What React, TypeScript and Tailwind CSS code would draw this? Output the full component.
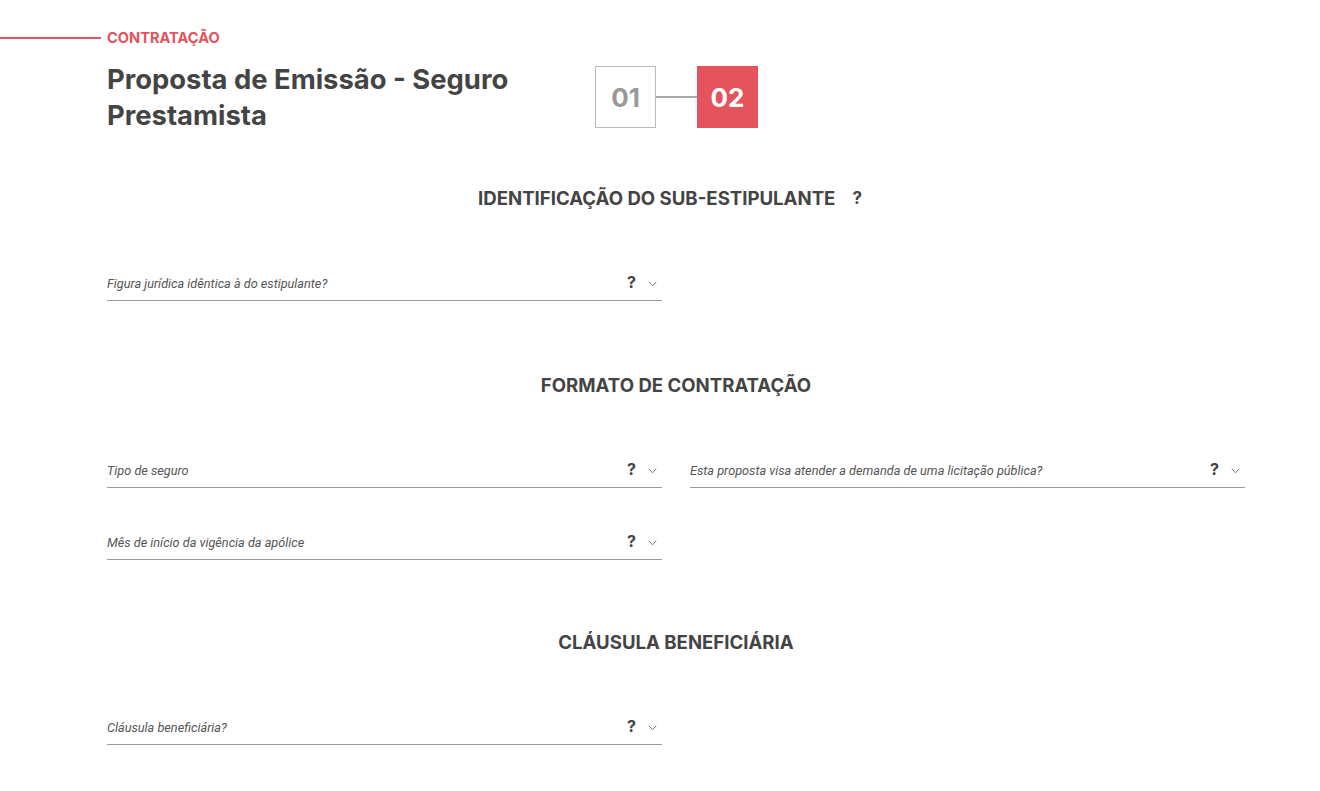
import React from "react";

const Chevron = () => (
  <svg width="9" height="6" viewBox="0 0 9 6" fill="none" className="mt-[3px]">
    <path d="M0.8 0.8 L4.5 4.8 L8.2 0.8" stroke="#777" strokeWidth="1" />
  </svg>
);

const Field = ({ label }: { label: string }) => (
  <div className="flex items-end justify-between border-b border-[#9a9a9a] pb-[8px] h-[36px]">
    <span className="italic text-[12.7px] text-[#555] leading-none pb-[1px]" style={{ fontFamily: "Roboto, sans-serif" }}>
      {label}
    </span>
    <div className="flex items-center gap-[12px] pr-[5px] mb-[2px]">
      <span className="font-bold text-[16px] text-[#444] leading-none" style={{ fontFamily: "Inter, sans-serif" }}>?</span>
      <Chevron />
    </div>
  </div>
);

const Header = ({ children, q }: { children: React.ReactNode; q?: boolean }) => (
  <div className={`flex justify-center items-center h-[24px] ${q ? "pr-[12px]" : ""}`}>
    <h2 className="font-bold text-[18.6px] text-[#444] uppercase">{children}</h2>
    {q && <span className="font-bold text-[17px] text-[#444] ml-[17px]">?</span>}
  </div>
);

export default function App() {
  return (
    <div className="w-[1320px] min-h-[791px] bg-white" style={{ fontFamily: "Inter, 'Open Sans', sans-serif" }}>
      <div className="pt-[29px] flex items-center">
        <div className="w-[101px] h-[2px] bg-[#e5535c]" />
        <span className="ml-[6px] text-[14.6px] font-bold text-[#e5535c] leading-[18px]">CONTRATAÇÃO</span>
      </div>
      <div className="pl-[107px] pr-[75px]">
        <div className="flex items-start mt-[14px]">
          <h1 className="w-[488px] text-[27.4px] font-bold text-[#444] leading-[36px]">
            Proposta de Emissão - Seguro Prestamista
          </h1>
          <div className="flex items-center mt-[5px]">
            <div className="w-[61px] h-[62px] border border-[#bbb] flex items-center justify-center text-[26px] font-bold text-[#999]">01</div>
            <div className="w-[41px] h-[2px] bg-[#aaa]" />
            <div className="w-[61px] h-[62px] bg-[#e5535c] flex items-center justify-center text-[26px] font-bold text-white">02</div>
          </div>
        </div>

        <div className="mt-[54px]">
          <Header q>Identificação do sub-estipulante</Header>
        </div>
        <div className="mt-[54px] grid grid-cols-2 gap-x-[28px]">
          <Field label="Figura jurídica idêntica à do estipulante?" />
        </div>

        <div className="mt-[73px]">
          <Header>Formato de contratação</Header>
        </div>
        <div className="mt-[54px] grid grid-cols-2 gap-x-[28px] gap-y-[36px]">
          <Field label="Tipo de seguro" />
          <Field label="Esta proposta visa atender a demanda de uma licitação pública?" />
          <Field label="Mês de início da vigência da apólice" />
        </div>

        <div className="mt-[71px]">
          <Header>Cláusula beneficiária</Header>
        </div>
        <div className="mt-[54px] grid grid-cols-2 gap-x-[28px]">
          <Field label="Cláusula beneficiária?" />
        </div>
      </div>
    </div>
  );
}
